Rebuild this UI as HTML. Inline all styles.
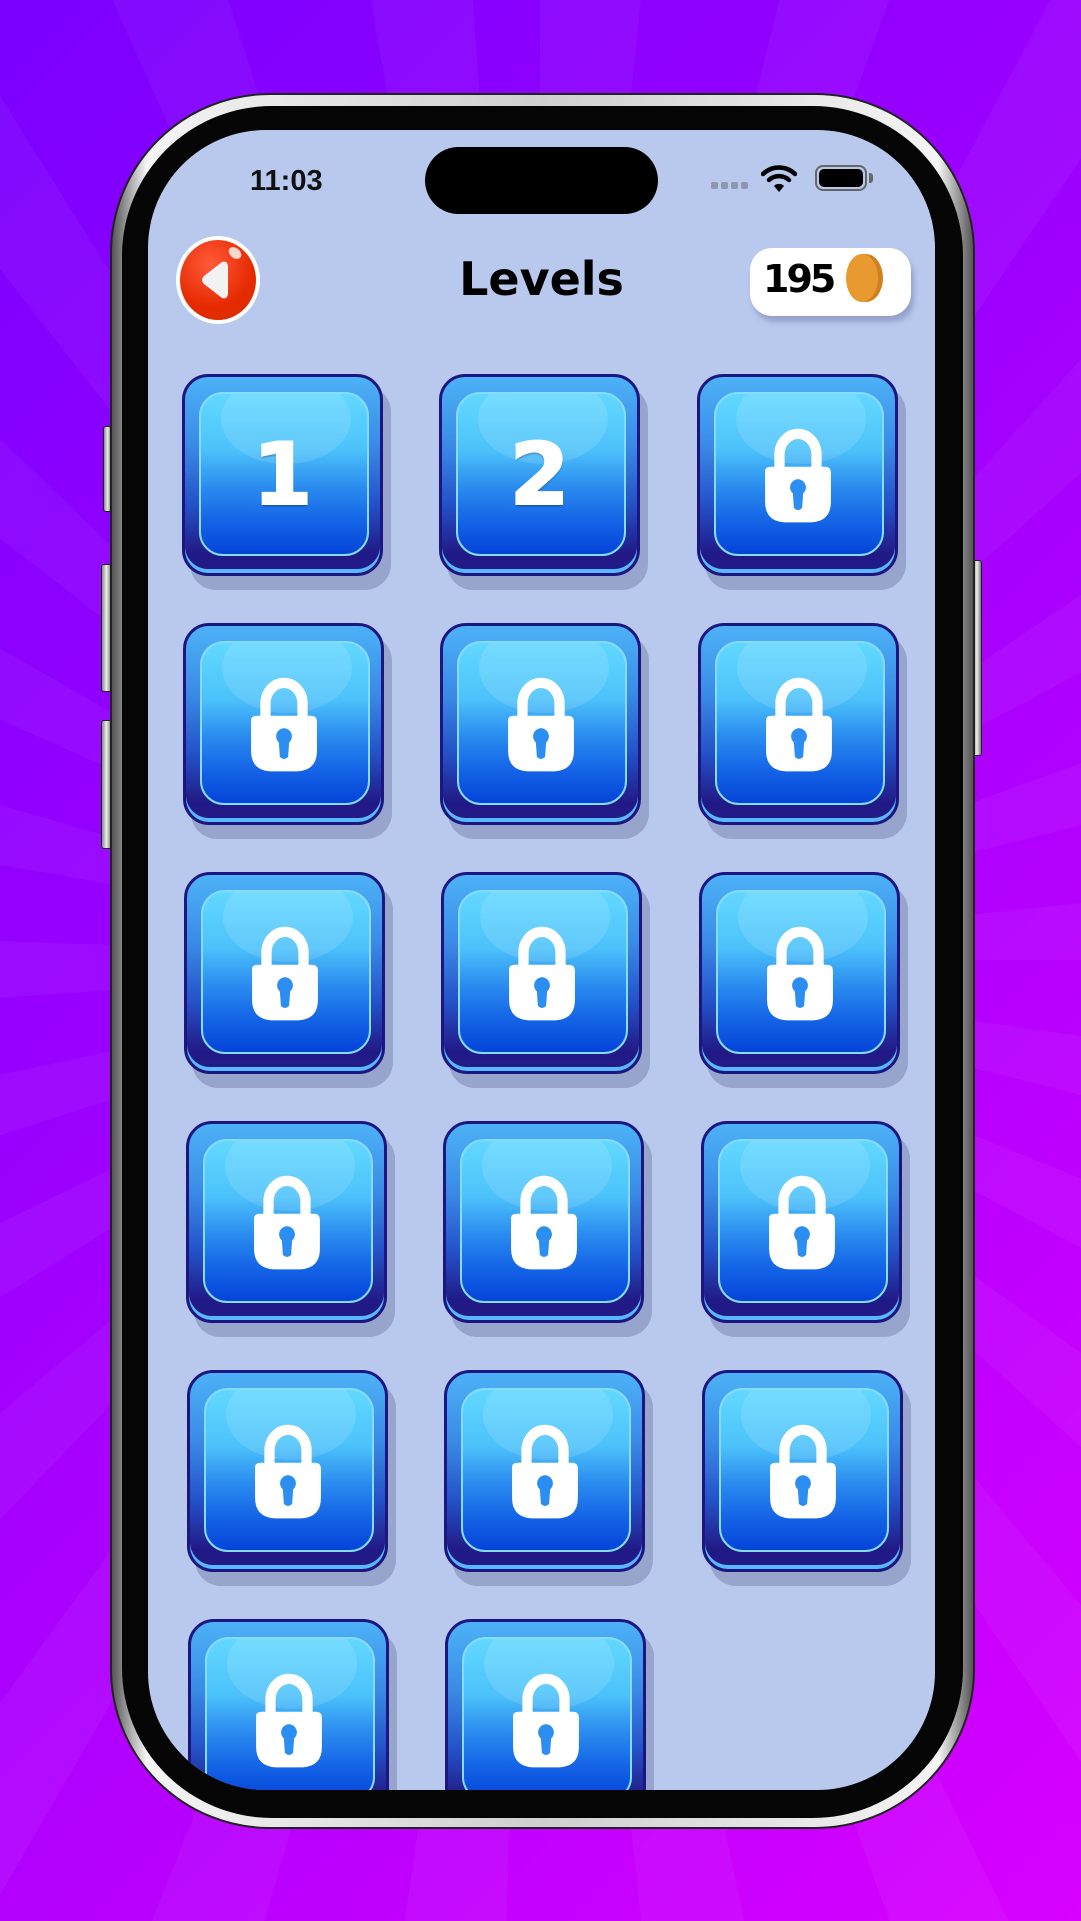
<!DOCTYPE html>
<html><head><meta charset="utf-8"><style>
*{margin:0;padding:0;box-sizing:border-box}
body{width:1081px;height:1921px;overflow:hidden;position:relative;font-family:"Liberation Sans",sans-serif;
background:linear-gradient(135deg,#7a00ff 0%,#a000ff 45%,#d800ff 100%);}
.rays{position:absolute;inset:0;background:repeating-conic-gradient(from 0deg at 540px 960px,rgba(255,255,255,.045) 0deg 6deg,rgba(255,255,255,0) 6deg 14deg);}
.sb{position:absolute;background:linear-gradient(90deg,#888,#eee,#777);border:1px solid #222;border-radius:3px}
.frame{position:absolute;left:110px;top:93px;width:865px;height:1736px;border-radius:160px;background:linear-gradient(90deg,#555,#f4f4f4 4%,#cfcfcf 50%,#f4f4f4 96%,#555);border:2px solid #222}
.bezel{position:absolute;left:122px;top:106px;width:841px;height:1712px;border-radius:150px;background:#050505}
.screen{position:absolute;left:148px;top:130px;width:787px;height:1660px;border-radius:118px;background:#b9c9ee;overflow:hidden}
.island{position:absolute;left:277px;top:17px;width:233px;height:67px;border-radius:34px;background:#000}
.time{position:absolute;left:102px;top:35px;font-size:29px;font-weight:bold;color:#111}
.btn{position:absolute;width:201px;height:202px}
.btn .sh{position:absolute;left:8px;top:12px;width:201px;height:204px;border-radius:26px;background:#97a4cb}
.btn .o{position:absolute;left:0;top:0;width:201px;height:202px;border-radius:26px;border:3px solid #1b1680;
background:linear-gradient(180deg,#4db2f7 0%,#3a8ae6 35%,#2451c8 65%,#211a86 90%,#221a86 100%);box-shadow:inset 0 -4px 0 #5ab8ff}
.btn .i{position:absolute;left:17px;top:18px;width:170px;height:164px;border-radius:24px;border:2px solid #86dcff;
background:linear-gradient(180deg,#62d8ff 0%,#4cc2fb 35%,#2b8cef 58%,#1463e6 80%,#0444d8 100%);overflow:hidden}
.btn .i:before{content:"";position:absolute;left:20px;top:-20px;width:130px;height:90px;border-radius:50%;background:rgba(255,255,255,.12)}
.btn .c{position:absolute;left:0;top:0;width:201px;height:202px;display:flex;align-items:center;justify-content:center}
.num{font-family:"DejaVu Sans",sans-serif;font-weight:bold;font-size:86px;color:#fff;-webkit-text-stroke:2px #fff;text-shadow:0 2px 2px rgba(0,0,60,.4)}
</style></head><body>
<div class="rays"></div>
<div class="sb" style="left:103px;top:426px;width:9px;height:86px"></div>
<div class="sb" style="left:101px;top:564px;width:11px;height:128px"></div>
<div class="sb" style="left:101px;top:720px;width:11px;height:129px"></div>
<div class="sb" style="left:972px;top:560px;width:10px;height:196px"></div>
<div class="frame"></div>
<div class="bezel"></div>
<div class="screen">
<div class="island"></div>
<div class="time">11:03</div>
<div style="position:absolute;left:563px;top:52px;display:flex;gap:3px">
<i style="width:7px;height:7px;border-radius:2px;background:#8e97ae;display:block"></i><i style="width:7px;height:7px;border-radius:2px;background:#8e97ae;display:block"></i><i style="width:7px;height:7px;border-radius:2px;background:#8e97ae;display:block"></i><i style="width:7px;height:7px;border-radius:2px;background:#8e97ae;display:block"></i></div>
<svg style="position:absolute;left:613px;top:34px" width="36" height="30" viewBox="0 0 36 30"><path d="M2 10 A23 23 0 0 1 34 10" fill="none" stroke="#000" stroke-width="4.5" stroke-linecap="round"/><path d="M8 16 A15 15 0 0 1 28 16" fill="none" stroke="#000" stroke-width="4.5" stroke-linecap="round"/><path d="M13 22 L18 28 L23 22 A7 7 0 0 0 13 22Z" fill="#000"/></svg>
<div style="position:absolute;left:667px;top:35px;width:52px;height:26px;border:2.5px solid #666;border-radius:8px;padding:2px"><div style="width:100%;height:100%;background:#000;border-radius:5px"></div></div>
<div style="position:absolute;left:721px;top:43px;width:4px;height:10px;background:#666;border-radius:0 3px 3px 0"></div>
<div style="position:absolute;left:28px;top:106px;width:84px;height:88px;border-radius:50%;background:#fff"></div>
<div style="position:absolute;left:32px;top:110px;width:76px;height:80px;border-radius:50%;background:radial-gradient(circle at 40% 30%,#ff5a3a,#e62a00 60%,#d43000)"></div>
<div style="position:absolute;left:80px;top:118px;width:14px;height:10px;border-radius:50%;background:rgba(255,255,255,.8);transform:rotate(40deg)"></div>
<svg style="position:absolute;left:50px;top:128px" width="40" height="44" viewBox="0 0 40 44"><path d="M24 4 Q30 2 30 10 L30 34 Q30 42 24 40 L6 26 Q2 22 6 18 Z" fill="#f2f2f2"/></svg>
<div style="position:absolute;left:0;width:787px;top:122px;text-align:center;font-family:'DejaVu Sans',sans-serif;font-weight:bold;font-size:46px;color:#000;">Levels</div>
<div style="position:absolute;left:602px;top:118px;width:161px;height:68px;border-radius:22px;background:#fff;box-shadow:3px 6px 6px rgba(80,90,140,.35)"></div>
<div style="position:absolute;left:615px;top:127px;font-family:'DejaVu Sans',sans-serif;font-weight:bold;font-size:38px;color:#000;letter-spacing:-3px">195</div>
<div style="position:absolute;left:701px;top:124px;width:34px;height:48px;border-radius:50%;background:#d1801f"></div>
<div style="position:absolute;left:698px;top:124px;width:32px;height:48px;border-radius:50%;background:#e8992f"></div>
<div id="g"></div>
</div>
<script>
var lock='<svg width="72" height="104" viewBox="0 0 70 100"><path d="M17 50 L17 30 A18 20 0 0 1 53 30 L53 50" fill="none" stroke="#fff" stroke-width="10"/><path d="M3 46 Q3 42 9 42 L61 42 Q67 42 67 48 L67 76 Q67 95 48 96 L22 96 Q3 95 3 76 Z" fill="#fff"/><path d="M35 54 A8 8 0 0 1 40 68 L39 82 Q35 86 31 82 L30 68 A8 8 0 0 1 35 54Z" fill="#2c8ef0"/></svg>';
var rows=[244,493,742,991,1240,1489],cols=[34,291,549];var h='';var n=0;
for(var r=0;r<6;r++)for(var c=0;c<3;c++){n++;if(n>17)break;var dx=Math.round(r*1.2);
var inner=n<=2?'<span class="num">'+n+'</span>':lock;
h+='<div class="btn" style="left:'+(cols[c]+dx)+'px;top:'+rows[r]+'px"><div class="sh"></div><div class="o"></div><div class="i"></div><div class="c">'+inner+'</div></div>';}
document.getElementById('g').innerHTML=h;
</script>
</body></html>
